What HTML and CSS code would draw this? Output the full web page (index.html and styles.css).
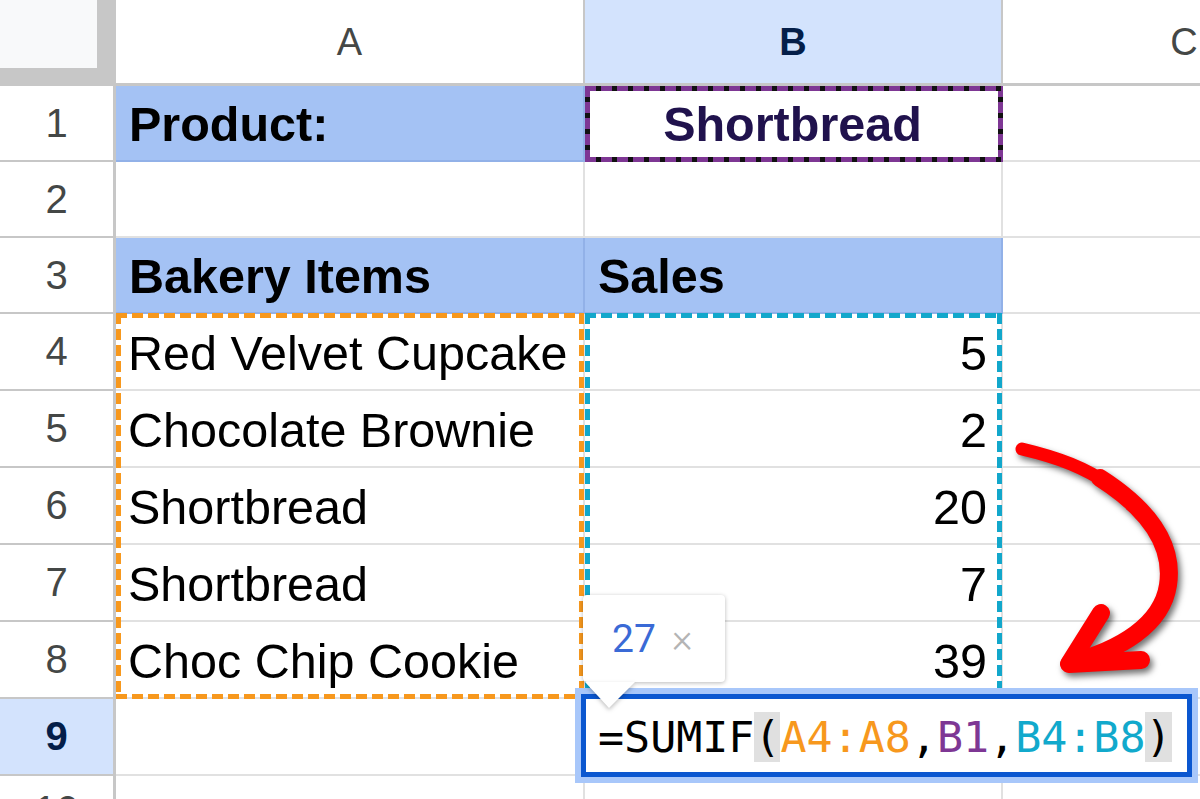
FILE: index.html
```html
<!DOCTYPE html>
<html>
<head>
<meta charset="utf-8">
<link rel="stylesheet" href="styles.css">
</head>
<body>
<div class="sheet">
  <div class="corner"><div class="corner-in"></div></div>
  <div class="colh">A</div>
  <div class="colh sel">B</div>
  <div class="colh">C</div>

  <div class="rowh">1</div>
  <div class="c hl bold">Product:</div>
  <div class="c center bold purple">Shortbread</div>
  <div class="c"></div>

  <div class="rowh">2</div>
  <div class="c"></div>
  <div class="c"></div>
  <div class="c"></div>

  <div class="rowh">3</div>
  <div class="c hl bold">Bakery Items</div>
  <div class="c hl bold">Sales</div>
  <div class="c"></div>

  <div class="rowh">4</div>
  <div class="c">Red Velvet Cupcake</div>
  <div class="c num">5</div>
  <div class="c"></div>

  <div class="rowh">5</div>
  <div class="c">Chocolate Brownie</div>
  <div class="c num">2</div>
  <div class="c"></div>

  <div class="rowh">6</div>
  <div class="c">Shortbread</div>
  <div class="c num">20</div>
  <div class="c"></div>

  <div class="rowh">7</div>
  <div class="c">Shortbread</div>
  <div class="c num">7</div>
  <div class="c"></div>

  <div class="rowh">8</div>
  <div class="c">Choc Chip Cookie</div>
  <div class="c num">39</div>
  <div class="c"></div>

  <div class="rowh sel">9</div>
  <div class="c"></div>
  <div class="c"></div>
  <div class="c"></div>

  <div class="rowh last">10</div>
  <div class="c"></div>
  <div class="c"></div>
  <div class="c"></div>

  <div class="range r-b1"></div>
  <div class="range r-a"></div>
  <div class="range r-b"></div>

  <div class="editor">
    <div class="editor-in">
      <span class="ftext">=SUMIF<span class="paren">(</span><span class="fa">A4:A8</span>,<span class="fb1">B1</span>,<span class="fb">B4:B8</span><span class="paren">)</span></span>
    </div>
    <div class="tip">
      <span class="tip-val">27</span><span class="tip-x">×</span>
      <svg class="tip-ptr" width="60" height="34" viewBox="0 0 60 34"><polygon points="4,0 54,0 28,26" fill="#fff"/></svg>
    </div>
  </div>

  <svg class="arrow" width="1200" height="799" viewBox="0 0 1200 799">
    <g fill="none" stroke="#ff0000" stroke-linecap="round" stroke-linejoin="round">
      <path d="M1022 449 C1060 458 1085 468 1110 485" stroke-width="13"/>
      <path d="M1100 478 C1150 510 1174 545 1168 585 C1162 625 1120 650 1070 663" stroke-width="18"/>
      <path d="M1101 613 L1069 664 L1141 660" stroke-width="18"/>
    </g>
  </svg>
</div>
</body>
</html>
```

FILE: styles.css
```css
* { box-sizing: border-box; }

body {
  margin: 0;
  width: 1200px;
  height: 799px;
  overflow: hidden;
  background: #fff;
  font-family: "Liberation Sans", Arial, sans-serif;
}

.sheet {
  position: relative;
  display: grid;
  grid-template-columns: 116px 469px 418px 364px;
  grid-template-rows: 86px 76px 76px 76px 77px 77px 77px 77px 77px 77px 77px;
  width: 1200px;
  height: 799px;
  overflow: hidden;
}

.corner {
  background: #c7c7c7;
  padding: 0 19px 18px 0;
}
.corner-in {
  width: 100%;
  height: 100%;
  background: #f8f9fa;
}

.colh {
  display: flex;
  align-items: center;
  justify-content: center;
  border-right: 2px solid #c7c7c7;
  border-bottom: 3px solid #c7c7c7;
  font-size: 38px;
  color: #444746;
  padding-top: 2px;
}

.rowh {
  display: flex;
  align-items: center;
  justify-content: center;
  border-right: 3px solid #c7c7c7;
  border-bottom: 2px solid #c7c7c7;
  font-size: 40px;
  color: #444746;
}
.rowh.last {
  align-items: flex-start;
  padding-top: 12px;
}

.colh.sel, .rowh.sel {
  background: #d3e3fd;
  color: #041e49;
  font-weight: bold;
}

.c {
  display: flex;
  align-items: center;
  padding: 2px 14px 0 12px;
  border-right: 2px solid #e1e1e1;
  border-bottom: 2px solid #e1e1e1;
  font-size: 48.5px;
  color: #000;
  white-space: nowrap;
  overflow: hidden;
}

.hl {
  background: #a4c2f4;
  border-color: #92b1e8;
}
.bold { font-weight: bold; padding-left: 13px; }
.center { justify-content: center; }
.purple { color: #20124d; }
.num { justify-content: flex-end; }

/* range highlight borders */
.range {
  position: absolute;
  inset: 0;
  pointer-events: none;
  --w: 5px;
  --c: #f7981d;
  --g: transparent;
  --h: repeating-linear-gradient(90deg, var(--c) 0 11px, var(--g) 11px 16px);
  --v: repeating-linear-gradient(180deg, var(--c) 0 11px, var(--g) 11px 16px);
  background:
    var(--h) left top / 100% var(--w) no-repeat,
    var(--h) left bottom / 100% var(--w) no-repeat,
    var(--v) left top / var(--w) 100% no-repeat,
    var(--v) right top / var(--w) 100% no-repeat;
}
.r-b1 {
  grid-row: 2 / 3;
  grid-column: 3 / 4;
  --c: #7e3794;
  --g: #111;
}
.r-a {
  grid-row: 5 / 10;
  grid-column: 2 / 3;
  top: -1px;
  right: 1px;
  --c: #f7981d;
}
.r-b {
  grid-row: 5 / 10;
  grid-column: 3 / 4;
  top: -1px;
  right: 1px;
  --c: #12a7cb;
}

/* formula editor */
.editor {
  position: absolute;
  grid-row: 10 / 11;
  grid-column: 3 / 4;
  top: -11px;
  left: -10px;
  right: -195px;
  bottom: -7px;
  border: 6px solid #a8c7fa;
}
.editor-in {
  width: 100%;
  height: 100%;
  border: 5px solid #0b57d0;
  background: #fff;
  display: flex;
  align-items: center;
  padding-left: 12px;
  padding-top: 2px;
}
.ftext {
  font-family: "DejaVu Sans Mono", "Liberation Mono", monospace;
  font-size: 43.3px;
  color: #000;
  white-space: pre;
}
.paren { background: #e0e0e0; }
.fa { color: #f7981d; }
.fb1 { color: #7e3794; }
.fb { color: #11a9cc; }

.tip {
  position: absolute;
  left: 2px;
  bottom: calc(100% + 12px);
  width: 142px;
  height: 87px;
  background: #fff;
  border-radius: 4px;
  box-shadow: 0 1px 4px rgba(0, 0, 0, 0.28);
  display: flex;
  align-items: center;
  padding-left: 29px;
  font-family: Roboto, "Liberation Sans", sans-serif;
}
.tip-val {
  font-size: 39px;
  color: #3a6ad6;
}
.tip-x {
  font-size: 40px;
  color: #b4b4b4;
  margin-left: 16px;
  font-weight: 300;
}
.tip-ptr {
  position: absolute;
  left: -2px;
  top: 87px;
  filter: drop-shadow(0 2px 2px rgba(0, 0, 0, 0.25));
}

.arrow {
  position: absolute;
  left: 0;
  top: 0;
  pointer-events: none;
  filter: drop-shadow(3px 4px 3px rgba(0, 0, 0, 0.55));
}
```
